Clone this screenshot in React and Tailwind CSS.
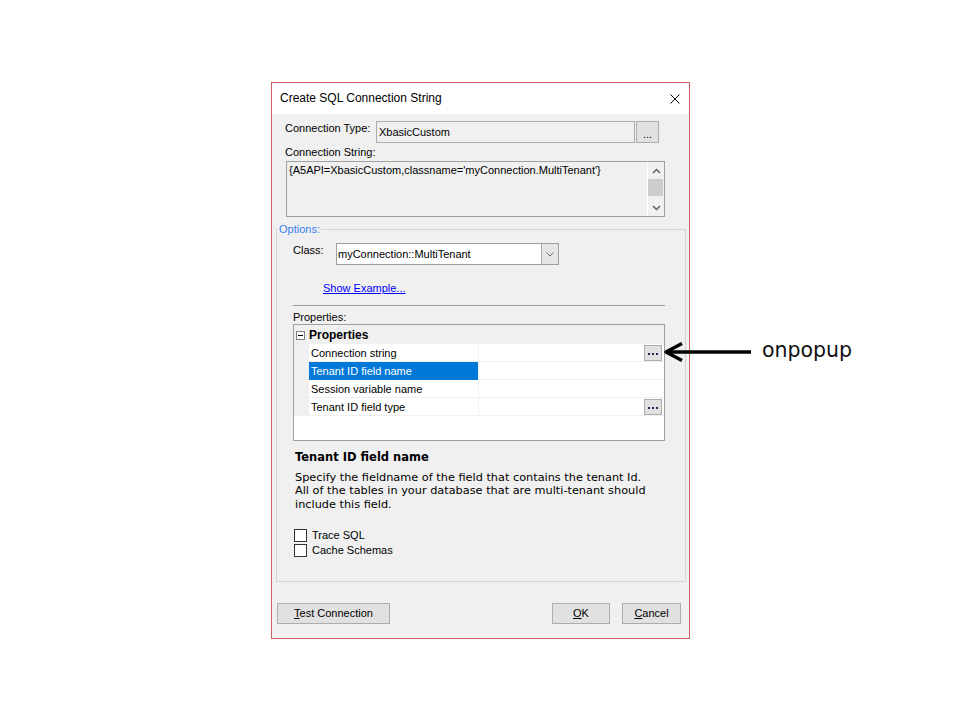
import React from "react";

const rows = [
  { name: "Connection string", popup: true },
  { name: "Tenant ID field name", selected: true },
  { name: "Session variable name" },
  { name: "Tenant ID field type", popup: true },
];

function Chevron({ up }) {
  return (
    <svg width="9" height="6" viewBox="0 0 9 6">
      <polyline
        points={up ? "1,5 4.5,1.5 8,5" : "1,1 4.5,4.5 8,1"}
        fill="none"
        stroke="#606060"
        strokeWidth="1.5"
      />
    </svg>
  );
}

function PopupButton() {
  return (
    <div className="w-[18px] h-[16px] border border-[#adadad] bg-[#e1e1e1] flex items-center justify-center gap-[2px] pt-[2px]">
      <span className="w-[2px] h-[2px] bg-[#26265c]" />
      <span className="w-[2px] h-[2px] bg-[#26265c]" />
      <span className="w-[2px] h-[2px] bg-[#26265c]" />
    </div>
  );
}

function CheckRow({ label }) {
  return (
    <div className="h-[15px] flex items-center pl-[1px]">
      <div className="w-[13px] h-[13px] border border-[#333333] bg-white" />
      <span className="ml-[5px]">{label}</span>
    </div>
  );
}

export default function App() {
  return (
    <div className="relative w-[960px] h-[720px] bg-white pt-[82px] font-['Liberation_Sans',Arial,sans-serif] text-[11px] leading-[13px] text-black">
      {/* Dialog */}
      <div className="ml-[271px] w-[419px] h-[557px] border border-[#d25f5f] bg-[#f0f0f0] flex flex-col">
        {/* Title bar */}
        <div className="h-[31px] bg-white flex items-center justify-between pl-[8px] pr-[9px]">
          <span className="text-[12px]">Create SQL Connection String</span>
          <svg width="10" height="10" viewBox="0 0 10 10">
            <path d="M0.5 0.5 L9.5 9.5 M9.5 0.5 L0.5 9.5" stroke="#000" strokeWidth="1" />
          </svg>
        </div>

        {/* Connection type */}
        <div className="mt-[7px] pl-[13px] flex">
          <div className="w-[91px] pt-[1px]">Connection Type:</div>
          <div className="w-[259px] h-[22px] border border-[#adadad] bg-[#f0f0f0] flex items-center pl-[2px]">
            XbasicCustom
          </div>
          <div className="ml-[1px] w-[23px] h-[22px] border border-[#adadad] bg-[#e1e1e1] flex items-end justify-center pb-[3px] leading-[10px]">
            ...
          </div>
        </div>

        {/* Connection string */}
        <div className="mt-[3px] pl-[13px]">Connection String:</div>
        <div className="mt-[2px] ml-[14px] w-[379px] h-[56px] border border-[#a0a0a0] flex">
          <div className="flex-1 pl-[2px] pt-[2px]">
            {"{A5API=XbasicCustom,classname='myConnection.MultiTenant'}"}
          </div>
          <div className="w-[17px] border-l border-white flex flex-col">
            <div className="h-[17px] flex items-center justify-center">
              <Chevron up />
            </div>
            <div className="h-[17px] w-[15px] bg-[#cdcdcd]" />
            <div className="flex-1" />
            <div className="h-[17px] flex items-center justify-center">
              <Chevron />
            </div>
          </div>
        </div>

        {/* Options group */}
        <fieldset className="mt-[6px] ml-[4px] w-[410px] border border-[#d5d5d5]">
          <legend className="pl-[2px] pr-[1px] text-[#3b7ff0] leading-[13px]">Options:</legend>
          <div className="pl-[16px] pt-[7px] pb-[23px]">
            <div className="flex">
              <div className="w-[43px] pt-[1px]">Class:</div>
              <div className="w-[223px] h-[22px] border border-[#a0a0a0] bg-white flex">
                <div className="flex-1 flex items-center pl-[1px]">myConnection::MultiTenant</div>
                <div className="w-[17px] bg-[#e5e5e5] border-l border-[#adadad] flex items-center justify-center">
                  <svg width="8" height="5" viewBox="0 0 8 5">
                    <polyline points="0.5,0.5 4,4 7.5,0.5" fill="none" stroke="#6f6f6f" strokeWidth="1" />
                  </svg>
                </div>
              </div>
            </div>

            <div className="mt-[17px] pl-[30px]">
              <a className="text-[#0000ff] underline">Show Example...</a>
            </div>

            <div className="mt-[10px] w-[372px] h-px bg-[#a0a0a0]" />

            <div className="mt-[5px]">Properties:</div>

            {/* Property grid */}
            <div className="w-[372px] h-[117px] border border-[#a0a0a0] bg-white flex flex-col">
              <div className="h-[19px] bg-[#f0f0f0] flex items-start">
                <div className="ml-[2px] mt-[6px] w-[9px] h-[9px] border border-[#808080] bg-white flex items-center justify-center">
                  <div className="w-[5px] h-px bg-black" />
                </div>
                <span className="ml-[4px] mt-[3px] font-bold text-[12px] leading-[14px]">Properties</span>
              </div>
              {rows.map((row) => (
                <div key={row.name} className="h-[18px] flex">
                  <div className="w-[15px] bg-[#f0f0f0]" />
                  <div
                    className={
                      row.selected
                        ? "w-[169px] bg-[#0078d7] text-white pl-[2px] pt-[1px] flex items-center"
                        : "w-[169px] border-b border-[#f0f0f0] pl-[2px] pt-[1px] flex items-center"
                    }
                  >
                    {row.name}
                  </div>
                  <div className="flex-1 border-l border-b border-[#f0f0f0] flex items-center justify-end pr-[2px]">
                    {row.popup && <PopupButton />}
                  </div>
                </div>
              ))}
              <div className="flex-1" />
            </div>

            {/* Property description */}
            <div className="mt-[9px] pl-[2px] font-['DejaVu_Sans',Verdana,sans-serif] font-bold text-[11.5px] leading-[14px]">
              Tenant ID field name
            </div>
            <p className="mt-[7px] pl-[2px] w-[360px] font-['DejaVu_Sans',Verdana,sans-serif] text-[11.3px] leading-[13.3px]">
              Specify the fieldname of the field that contains the tenant Id. All of the tables in your database that are multi-tenant should include this field.
            </p>

            <div className="mt-[17px]">
              <CheckRow label="Trace SQL" />
              <CheckRow label="Cache Schemas" />
            </div>
          </div>
        </fieldset>

        {/* Buttons */}
        <div className="mt-[21px] pl-[5px] pr-[8px] flex justify-between">
          <div className="w-[113px] h-[21px] border border-[#adadad] bg-[#e1e1e1] flex items-center justify-center">
            <span>
              <span className="underline">T</span>est Connection
            </span>
          </div>
          <div className="flex">
            <div className="w-[58px] h-[21px] border border-[#adadad] bg-[#e1e1e1] flex items-center justify-center">
              <span>
                <span className="underline">O</span>K
              </span>
            </div>
            <div className="ml-[12px] w-[59px] h-[21px] border border-[#adadad] bg-[#e1e1e1] flex items-center justify-center">
              <span>
                <span className="underline">C</span>ancel
              </span>
            </div>
          </div>
        </div>
      </div>

      {/* Annotation arrow */}
      <svg className="absolute left-[660px] top-[340px]" width="96" height="24" viewBox="0 0 96 24">
        <line x1="7" y1="12" x2="91" y2="12" stroke="#000" strokeWidth="3.5" />
        <polyline points="22,3.5 6,12 22,20.5" fill="none" stroke="#000" strokeWidth="3.5" strokeLinejoin="round" />
      </svg>
      <div className="absolute left-[762px] top-[340px] font-['DejaVu_Sans',sans-serif] text-[20.5px] leading-[20px] text-[#111]">
        onpopup
      </div>
    </div>
  );
}
